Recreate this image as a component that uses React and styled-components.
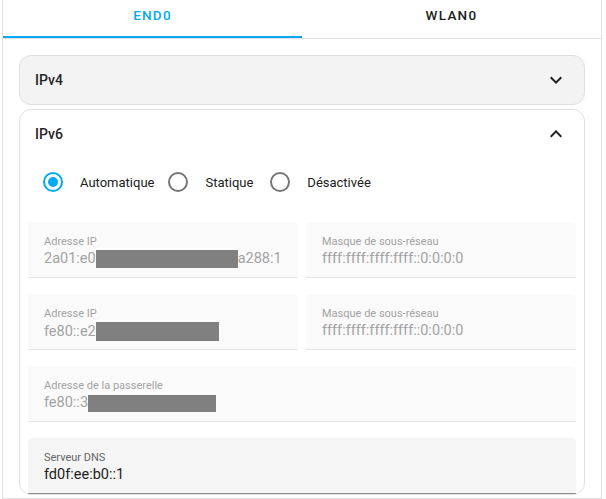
import React from 'react';
import styled, { createGlobalStyle } from 'styled-components';

const GlobalStyle = createGlobalStyle`
  html, body {
    margin: 0;
    padding: 0;
    background: #ffffff;
    font-family: Roboto, "Noto Sans", sans-serif;
    color: #212121;
  }
`;

const Card = styled.div`
  width: 600px;
  margin-left: 2px;
  box-sizing: border-box;
  border: 1px solid #e0e0e0;
  border-top: none;
  background: #fff;
  height: 499px;
  overflow: hidden;
`;

const TabBar = styled.div`
  display: flex;
  border-bottom: 1px solid #e0e0e0;
`;

const Tab = styled.div`
  flex: 1;
  height: 38px;
  box-sizing: border-box;
  padding-bottom: 6px;
  display: flex;
  align-items: center;
  justify-content: center;
  font-size: 13.5px;
  font-weight: 500;
  letter-spacing: 1.25px;
  text-transform: uppercase;
  color: ${p => (p.$active ? '#03a9f4' : '#212121')};
  border-bottom: 2px solid ${p => (p.$active ? '#03a9f4' : 'transparent')};
`;

const Content = styled.div`
  padding: 16px 16px 0 16px;
  display: flex;
  flex-direction: column;
  gap: 4px;
`;

const Panel = styled.div`
  border: 1px solid #e0e0e0;
  border-radius: 12px;
  background: ${p => (p.$open ? '#ffffff' : '#f3f3f3')};
`;

const PanelHeader = styled.div`
  height: 48px;
  display: flex;
  align-items: center;
  justify-content: space-between;
  padding: 0 16px 0 15px;
  font-size: 14px;
  font-weight: 500;
  color: #262626;
`;

const PanelBody = styled.div`
  padding: 4px 8px 0 8px;
`;

const RadioRow = styled.div`
  display: flex;
  align-items: center;
  padding-left: 5px;
  margin-bottom: 20px;
`;

const FormField = styled.label`
  display: flex;
  align-items: center;
  height: 40px;
  font-size: 13px;
  color: #212121;
  margin-right: ${p => p.$gap}px;
`;

const RadioBox = styled.span`
  width: 40px;
  height: 40px;
  display: flex;
  align-items: center;
  justify-content: center;
  margin-right: 7px;
`;

const RadioCircle = styled.span`
  width: 20px;
  height: 20px;
  box-sizing: border-box;
  border-radius: 50%;
  border: 2px solid ${p => (p.$checked ? '#03a9f4' : '#757575')};
  display: flex;
  align-items: center;
  justify-content: center;
  &::after {
    content: '';
    width: 10px;
    height: 10px;
    border-radius: 50%;
    background: ${p => (p.$checked ? '#03a9f4' : 'transparent')};
  }
`;

const FieldGrid = styled.div`
  display: grid;
  grid-template-columns: minmax(0, 1fr) minmax(0, 1fr);
  column-gap: 8px;
  row-gap: 16px;
`;

const Field = styled.div`
  grid-column: ${p => (p.$wide ? '1 / span 2' : 'auto')};
  height: 56px;
  box-sizing: border-box;
  padding: 13px 16px 0 16px;
  border-radius: 4px 4px 0 0;
  background: ${p => (p.$disabled ? '#fafafa' : '#f5f5f5')};
  border-bottom: 1px solid ${p => (p.$disabled ? '#e4e4e4' : '#8f8f8f')};
  overflow: hidden;
`;

const FieldLabel = styled.div`
  font-size: 11px;
  line-height: 13px;
  color: ${p => (p.$disabled ? '#a3a3a3' : '#666666')};
  white-space: nowrap;
`;

const FieldValue = styled.div`
  font-size: 14.5px;
  line-height: 18px;
  margin-top: 2px;
  color: ${p => (p.$disabled ? '#a3a3a3' : '#212121')};
  white-space: nowrap;
  display: flex;
  align-items: center;
`;

const Redacted = styled.span`
  display: inline-block;
  background: #808080;
  width: ${p => p.$w}px;
  height: ${p => p.$h}px;
`;

const Chevron = ({ up }) => (
  <svg width="24" height="24" viewBox="0 0 24 24" fill="#212121">
    {up ? (
      <path d="M7.41,15.41L12,10.83L16.59,15.41L18,14L12,8L6,14L7.41,15.41Z" />
    ) : (
      <path d="M7.41,8.58L12,13.17L16.59,8.58L18,10L12,16L6,10L7.41,8.58Z" />
    )}
  </svg>
);

const Radio = ({ checked, label, gap }) => (
  <FormField $gap={gap}>
    <RadioBox>
      <RadioCircle $checked={checked} />
    </RadioBox>
    {label}
  </FormField>
);

const fields = [
  { label: 'Adresse IP', pre: '2a01:e0', box: [142, 18], post: 'a288:1' },
  { label: 'Masque de sous-réseau', pre: 'ffff:ffff:ffff:ffff::0:0:0:0' },
  { label: 'Adresse IP', pre: 'fe80::e2', box: [123, 19] },
  { label: 'Masque de sous-réseau', pre: 'ffff:ffff:ffff:ffff::0:0:0:0' },
  { label: 'Adresse de la passerelle', pre: 'fe80::3', box: [128, 17], wide: true },
];

export default function App() {
  return (
    <>
      <GlobalStyle />
      <Card>
        <TabBar>
          <Tab $active>end0</Tab>
          <Tab>wlan0</Tab>
        </TabBar>
        <Content>
          <Panel>
            <PanelHeader>
              IPv4
              <Chevron />
            </PanelHeader>
          </Panel>
          <Panel $open>
            <PanelHeader>
              IPv6
              <Chevron up />
            </PanelHeader>
            <PanelBody>
              <RadioRow>
                <Radio checked label="Automatique" gap={4} />
                <Radio label="Statique" gap={7} />
                <Radio label="Désactivée" gap={0} />
              </RadioRow>
              <FieldGrid>
                {fields.map((f, i) => (
                  <Field key={i} $disabled $wide={f.wide}>
                    <FieldLabel $disabled>{f.label}</FieldLabel>
                    <FieldValue $disabled>
                      {f.pre}
                      {f.box && <Redacted $w={f.box[0]} $h={f.box[1]} />}
                      {f.post}
                    </FieldValue>
                  </Field>
                ))}
                <Field $wide>
                  <FieldLabel>Serveur DNS</FieldLabel>
                  <FieldValue>fd0f:ee:b0::1</FieldValue>
                </Field>
              </FieldGrid>
            </PanelBody>
          </Panel>
        </Content>
      </Card>
    </>
  );
}
